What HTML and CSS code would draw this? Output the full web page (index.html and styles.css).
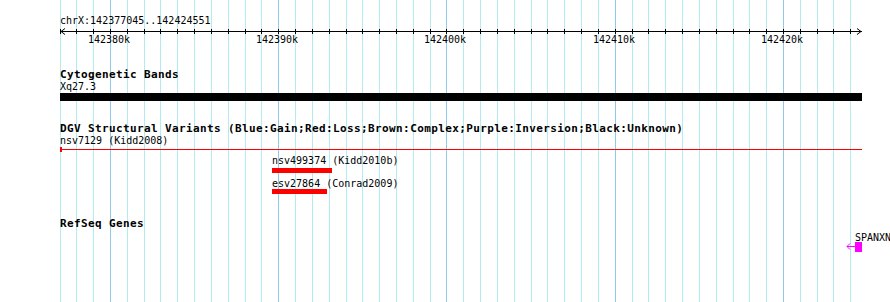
FILE: index.html
```html
<!DOCTYPE html>
<html>
<head>
    <meta charset="UTF-8">
    <title>chrX:142377045..142424551</title>
    <link rel="stylesheet" href="styles.css">
</head>
<body>

<div class="browser">
    <!-- Сетка, строится скриптом -->
    <div class="grid" id="grid"></div>

    <!-- Линейка -->
    <div class="ruler" id="ruler">
        <div class="ruler-name">chrX:142377045..142424551</div>
        <div class="axis"></div>
        <svg class="arrow arrow-left" width="6" height="7"><path d="M5 0.5 L1 3.5 L5 6.5"/></svg>
        <svg class="arrow arrow-right" width="6" height="7"><path d="M1 0.5 L5 3.5 L1 6.5"/></svg>
    </div>

    <!-- Цитогенетические полосы -->
    <div class="track track-cyto">
        <div class="track-title">Cytogenetic Bands</div>
        <div class="track-label">Xq27.3</div>
        <div class="band"></div>
    </div>

    <!-- DGV -->
    <div class="track track-dgv">
        <div class="track-title">DGV Structural Variants (Blue:Gain;Red:Loss;Brown:Complex;Purple:Inversion;Black:Unknown)</div>
        <div class="track-label">nsv7129 (Kidd2008)</div>
        <div class="lane lane-dgv">
            <div class="variant-line"></div>
            <div class="variant-start"></div>
            <div class="feature-label label-1" data-start="142389629">nsv499374 (Kidd2010b)</div>
            <div class="variant bar-1" data-start="142389629" data-end="142393195"></div>
            <div class="feature-label label-2" data-start="142389629">esv27864 (Conrad2009)</div>
            <div class="variant bar-2" data-start="142389629" data-end="142392898"></div>
        </div>
    </div>

    <!-- RefSeq -->
    <div class="track track-refseq">
        <div class="track-title">RefSeq Genes</div>
        <div class="lane lane-refseq">
            <div class="gene-name">SPANXN</div>
            <svg class="gene-arrow" width="9" height="7"><path d="M4 0.5 L1 3.5 L4 6.5 M1 3.5 L9 3.5"/></svg>
            <div class="gene-box"></div>
        </div>
    </div>
</div>

<script>
    const START = 142377045;
    const X0 = 60.28;      // левый край панели
    const SCALE = 0.016825; // пикселей на нуклеотид

    function toX(bp) {
        return Math.round(X0 + (bp - START) * SCALE);
    }

    // Сетка и деления линейки
    const grid = document.getElementById("grid");
    const ruler = document.getElementById("ruler");
    for (let bp = 142377000; bp <= 142424000; bp += 1000) {
        const x = toX(bp);
        const major = bp % 10000 === 0;

        const line = document.createElement("div");
        line.className = major ? "grid-line major" : "grid-line";
        line.style.left = x + "px";
        grid.appendChild(line);

        if (x < 60) continue;
        const tick = document.createElement("div");
        tick.className = "tick";
        tick.style.left = x + "px";
        ruler.appendChild(tick);

        if (major) {
            const label = document.createElement("div");
            label.className = "tick-label";
            label.textContent = (bp / 1000) + "k";
            label.style.left = (x - 22) + "px";
            ruler.appendChild(label);
        }
    }

    // Позиции объектов по координатам
    document.querySelectorAll("[data-start]").forEach(el => {
        const x = toX(+el.dataset.start);
        el.style.left = x + "px";
        if (el.dataset.end) {
            el.style.width = (toX(+el.dataset.end) - x) + "px";
        }
    });
</script>

</body>
</html>
```

FILE: styles.css
```css
body {
    margin: 0;
    background-color: #fff;
    font-family: "DejaVu Sans Mono", monospace;
    font-size: 10px;
    color: #000;
}
.browser {
    position: relative;
    width: 890px;
    height: 302px;
    overflow: hidden;
}
.grid {
    position: absolute;
    top: 0;
    left: 0;
    right: 0;
    bottom: 0;
}
.grid-line {
    position: absolute;
    top: 0;
    bottom: 0;
    width: 1px;
    background-color: #b2ebf0;
}
.grid-line.major {
    background-color: #8ecaea;
}

/* Линейка */
.ruler {
    position: relative;
    height: 48px;
}
.ruler-name {
    padding: 15px 0 0 60px;
    line-height: 12px;
}
.axis {
    position: absolute;
    left: 60px;
    top: 31px;
    width: 802px;
    height: 1px;
    background-color: #000;
}
.arrow {
    position: absolute;
    top: 28px;
}
.arrow path {
    fill: none;
    stroke: #000;
    stroke-width: 1;
}
.arrow-left {
    left: 60px;
}
.arrow-right {
    left: 856px;
}
.tick {
    position: absolute;
    top: 29px;
    width: 1px;
    height: 5px;
    background-color: #000;
}
.tick-label {
    position: absolute;
    top: 34px;
    line-height: 12px;
}

/* Треки */
.track {
    position: relative;
    padding-left: 60px;
}
.track-title {
    padding-top: 1px;
    font-size: 11px;
    font-weight: bold;
    letter-spacing: 0.38px;
    line-height: 12px;
    white-space: nowrap;
}
.track-label {
    line-height: 12px;
}
.track-cyto {
    margin-top: 20px;
}
.band {
    width: 802px;
    height: 8px;
    background-color: #000;
}
.track-dgv {
    margin-top: 21px;
}
.lane {
    position: relative;
    margin-left: -60px;
}
.lane-dgv {
    height: 53px;
}
.variant-line {
    position: absolute;
    left: 60px;
    top: 2px;
    width: 802px;
    height: 1px;
    background-color: #f00;
}
.variant-start {
    position: absolute;
    left: 60px;
    top: 0;
    width: 2px;
    height: 5px;
    background-color: #f00;
}
.feature-label {
    position: absolute;
    line-height: 12px;
    white-space: nowrap;
}
.label-1 {
    top: 8px;
}
.label-2 {
    top: 31px;
}
.variant {
    position: absolute;
    height: 5px;
    background-color: #f00;
}
.bar-1 {
    top: 21px;
}
.bar-2 {
    top: 42px;
}
.track-refseq {
    margin-top: 17px;
}
.lane-refseq {
    height: 60px;
}
.gene-name {
    position: absolute;
    left: 855px;
    top: 2px;
    line-height: 12px;
}
.gene-arrow {
    position: absolute;
    left: 846px;
    top: 13px;
}
.gene-arrow path {
    fill: none;
    stroke: #f0f;
    stroke-width: 1;
}
.gene-box {
    position: absolute;
    left: 855px;
    top: 12px;
    width: 7px;
    height: 10px;
    background-color: #f0f;
}
```
